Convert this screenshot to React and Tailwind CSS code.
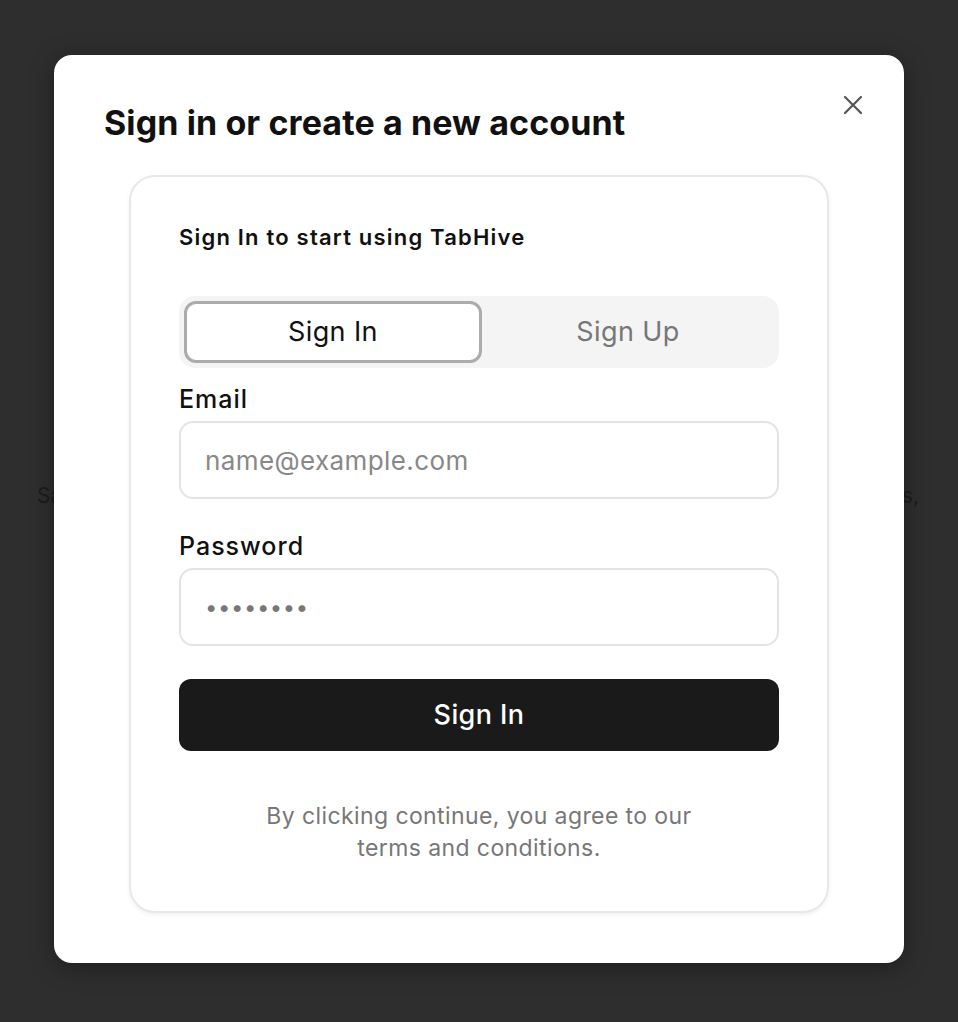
import { useState } from "react";

export default function App() {
  const [tab, setTab] = useState("signin");

  return (
    <div className="relative h-[1022px] bg-[#2e2e2e] font-['Inter','Noto_Sans',sans-serif] overflow-hidden">
      {/* page behind the dialog */}
      <div className="pt-[480px] pl-[37px]">
        <p className="w-[882px] text-[21px] text-[#1c1c1c] leading-8 [text-align-last:justify]">
          Save your open tabs into hives and reopen them later on any of your devices,
        </p>
      </div>

      <div className="absolute inset-0 flex items-center justify-center">
        <div className="relative -mt-1 w-[850px] bg-white rounded-[18px] shadow-[0_4px_24px_rgba(0,0,0,0.35)] pt-[46px] pb-[50px]">
          <button className="absolute top-[38px] right-[39px] text-[#555]">
            <svg width="24" height="24" viewBox="0 0 24 24" fill="none" stroke="currentColor" strokeWidth="2.2" strokeLinecap="round">
              <path d="M4 4 L20 20 M20 4 L4 20" />
            </svg>
          </button>

          <h1 className="px-[50px] text-[34px] leading-[44px] font-bold tracking-[0.1px] text-[#111]">
            Sign in or create a new account
          </h1>

          <div className="mx-auto mt-[30px] w-[700px] rounded-[26px] border-2 border-[#e8e8e8] shadow-[0_2px_4px_rgba(0,0,0,0.06)] px-[48px] pt-[46px] pb-[47px]">
            <h2 className="text-[22px] leading-7 font-semibold tracking-[1.2px] text-[#111]">Sign In to start using TabHive</h2>

            <div className="mt-[45px] flex h-[72px] rounded-[16px] bg-[#f4f4f4] p-[5px]">
              <button
                onClick={() => setTab("signin")}
                className={
                  tab === "signin"
                    ? "flex-1 rounded-[12px] bg-white border-[3px] border-[#ababab] text-[27px] tracking-[0.4px] text-[#111]"
                    : "flex-1 rounded-[12px] text-[27px] tracking-[0.4px] text-[#777]"
                }
              >
                Sign In
              </button>
              <button
                onClick={() => setTab("signup")}
                className={
                  tab === "signup"
                    ? "flex-1 rounded-[12px] bg-white border-[3px] border-[#ababab] text-[27px] tracking-[0.4px] text-[#111]"
                    : "flex-1 rounded-[12px] text-[27px] tracking-[0.4px] text-[#777]"
                }
              >
                Sign Up
              </button>
            </div>

            <label className="block mt-[15px] text-[25px] leading-8 font-medium tracking-[1px] text-[#111]">Email</label>
            <input
              type="email"
              placeholder="name@example.com"
              className="mt-[6px] w-full h-[78px] rounded-[14px] border-2 border-[#e4e4e4] px-[24px] text-[26px] tracking-[0.4px] placeholder:text-[#888] focus:outline-none"
            />

            <label className="block mt-[31px] text-[25px] leading-8 font-medium tracking-[1px] text-[#111]">Password</label>
            <input
              type="password"
              defaultValue="password"
              className="mt-[6px] w-full h-[78px] rounded-[14px] border-2 border-[#e4e4e4] px-[24px] text-[22px] text-[#777] tracking-[0.6px] focus:outline-none"
            />

            <button className="mt-[33px] w-full h-[72px] rounded-[12px] bg-[#1a1a1a] text-white text-[27px] font-medium tracking-[0.4px]">
              Sign In
            </button>

            <p className="mt-[49px] text-center text-[23px] leading-8 tracking-[0.4px] text-[#777]">
              By clicking continue, you agree to our
              <br />
              terms and conditions.
            </p>
          </div>
        </div>
      </div>
    </div>
  );
}
